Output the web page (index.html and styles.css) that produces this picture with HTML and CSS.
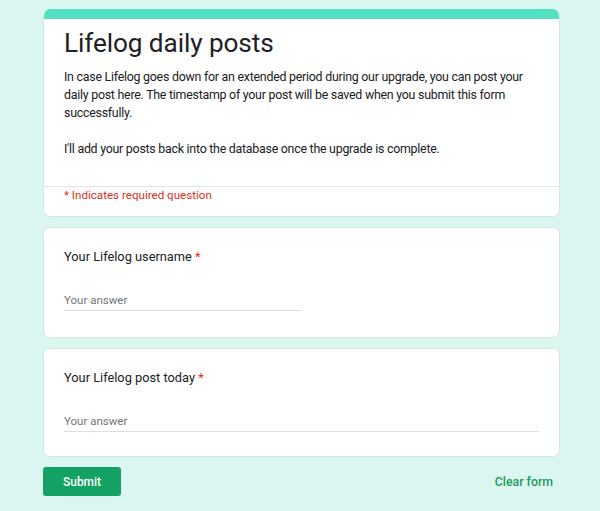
FILE: index.html
```html
<!DOCTYPE html>
<html>
<head>
<meta charset="utf-8">
<link rel="stylesheet" href="styles.css">
</head>
<body>
<div class="form">
  <div class="card header-card">
    <div class="accent"></div>
    <div class="header-body">
      <h1 class="title">Lifelog daily posts</h1>
      <p class="desc">In case Lifelog goes down for an extended period during our upgrade, you can post your daily post here. The timestamp of your post will be saved when you submit this form successfully.</p>
      <p class="desc gap">I'll add your posts back into the database once the upgrade is complete.</p>
    </div>
    <div class="required-note">* Indicates required question</div>
  </div>

  <div class="card question">
    <div class="q-label">Your Lifelog username <span class="star">*</span></div>
    <div class="answer short">Your answer</div>
  </div>

  <div class="card question last">
    <div class="q-label">Your Lifelog post today <span class="star">*</span></div>
    <div class="answer long">Your answer</div>
  </div>

  <div class="actions">
    <button class="submit">Submit</button>
    <button class="clear">Clear form</button>
  </div>
</div>
</body>
</html>
```
FILE: styles.css
```css
html, body {
  margin: 0;
  padding: 0;
  background: #dbf6f0;
  font-family: Roboto, "Noto Sans", Arial, sans-serif;
  color: #202124;
}
.form {
  width: 517px;
  margin-left: 43px;
  padding-top: 9px;
  display: flex;
  flex-direction: column;
  gap: 10px;
}
.card {
  background: #fff;
  border: 1px solid #d4e7e2;
  border-radius: 7px;
  box-sizing: border-box;
}
.header-card {
  overflow: hidden;
  border-top: none;
  height: 208px;
}
.accent {
  height: 10px;
  background: #52e2c2;
}
.header-body {
  padding: 8px 20px 0 20px;
  height: 168px;
  box-sizing: border-box;
  border-bottom: 1px solid #e3e6e8;
}
.title {
  margin: 0;
  font-size: 26.2px;
  line-height: 32px;
  font-weight: 400;
  letter-spacing: -0.1px;
  color: #202124;
}
.desc {
  margin: 9px 0 0 0;
  font-size: 12.4px;
  line-height: 18px;
  letter-spacing: -0.25px;
  color: #202124;
}
.desc.gap {
  margin-top: 18px;
}
.required-note {
  padding: 0 20px;
  font-size: 11.6px;
  line-height: 16px;
  color: #d93025;
}
.question {
  height: 111px;
  padding: 19px 20px 0 20px;
}
.question.last {
  height: 109px;
}
.q-label {
  font-size: 12.8px;
  line-height: 20px;
  color: #202124;
}
.star {
  color: #d93025;
}
.answer {
  margin-top: 25px;
  font-size: 11.5px;
  line-height: 16px;
  color: #70757a;
  padding-bottom: 2px;
  border-bottom: 1px solid #e0e0e0;
}
.answer.short {
  width: 238px;
}
.actions {
  display: flex;
  justify-content: space-between;
  align-items: center;
  padding-bottom: 15px;
}
.submit {
  width: 78px;
  height: 29px;
  border: none;
  border-radius: 3px;
  background: #13a263;
  color: #fff;
  font-family: Roboto, Arial, sans-serif;
  font-weight: 500;
  font-size: 11.9px;
  padding: 0;
}
.clear {
  background: none;
  border: none;
  color: #1e9a61;
  font-family: Roboto, Arial, sans-serif;
  font-weight: 500;
  font-size: 12.3px;
  padding: 0;
  margin-right: 7px;
}
```
